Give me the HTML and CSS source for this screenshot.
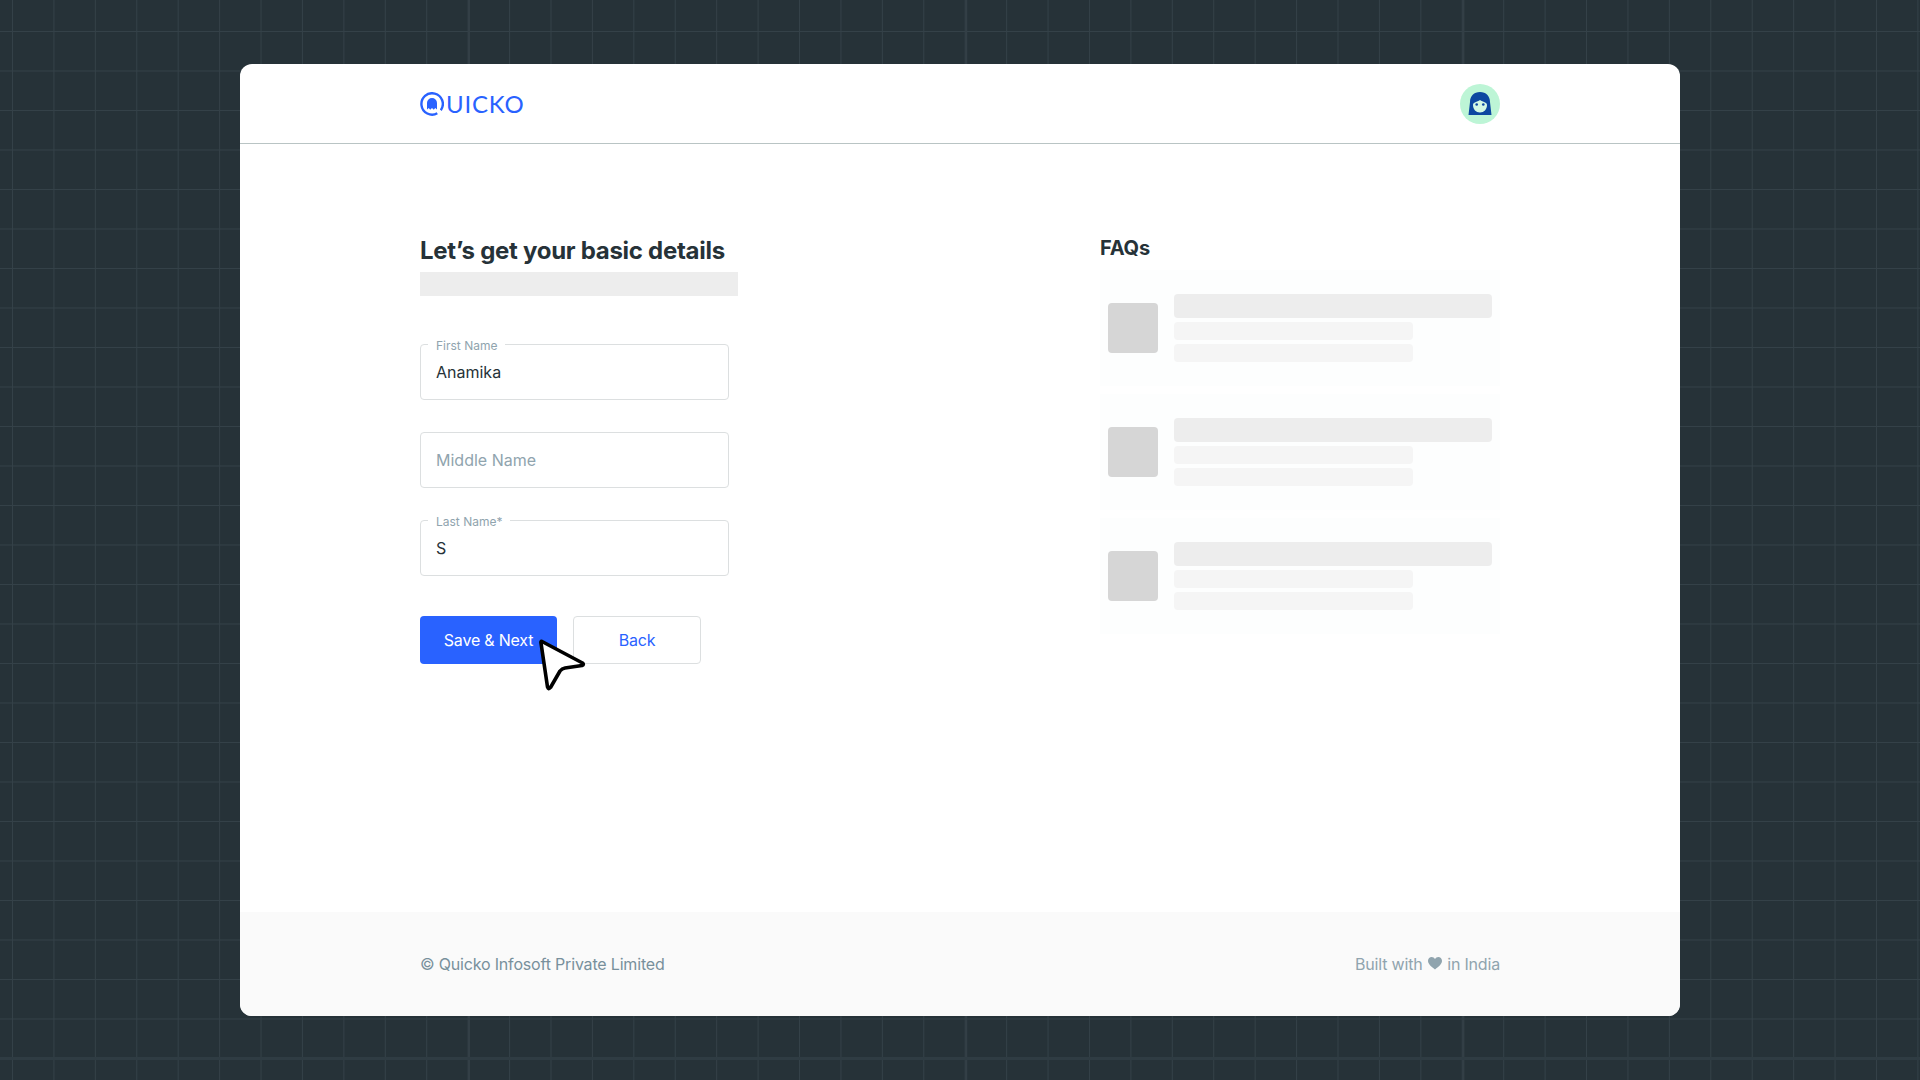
FILE: index.html
```html
<!DOCTYPE html>
<html>

<head>
    <title>Quicko</title>
    <meta charset="utf-8">
    <meta name="viewport" content="width=device-width, initial-scale=1.0">
    <link rel="stylesheet" href="styles.css">
</head>

<body>
    <div class="kort">
        <header class="top">
            <div class="logo">
                <svg class="logo-ikon" width="24" height="24" viewBox="0 0 24 24">
                    <path d="M17.300 21.300A10.700 10.700 0 1 1 20.800 18.200" fill="none" stroke="#2962ff" stroke-width="2.400"/>
                    <path d="M7 17.500V11a5 5 0 0 1 10 0v6.500l-1.800-1.500-1.400 1.700-1.800-1.700-1.800 1.700-1.400-1.700z" fill="#2962ff"/>
                </svg>
                <span class="logo-tekst">UICKO</span>
            </div>
            <div class="avatar">
                <svg width="24" height="23" viewBox="0 0 24 23">
                    <path d="M.5 23L2 10C2 4 6 0 12 0s10 4 10 10l1.500 13z" fill="#0d47a1"/>
                    <path d="M5 13c0-3 4-3 7-5 3 2 7 2 7 5 0 4.500-3 7.500-7 7.500S5 17.500 5 13z" fill="#d4f8e4"/>
                    <circle cx="8.700" cy="12.500" r="1.300" fill="#0d47a1"/>
                    <circle cx="15.300" cy="12.500" r="1.300" fill="#0d47a1"/>
                </svg>
            </div>
        </header>

        <main class="indhold">
            <section class="formular">
                <h1>Let’s get your basic details</h1>
                <div class="skelet-linje"></div>

                <div class="felter">
                    <div class="felt">
                        <span class="felt-label">First Name</span>
                        <span class="felt-vaerdi">Anamika</span>
                    </div>
                    <div class="felt">
                        <span class="felt-tom">Middle Name</span>
                    </div>
                    <div class="felt">
                        <span class="felt-label">Last Name*</span>
                        <span class="felt-vaerdi">S</span>
                    </div>
                </div>

                <div class="knapper">
                    <button class="knap-primaer">Save &amp; Next</button>
                    <button class="knap-sekundaer">Back</button>
                    <svg class="cursor" width="56" height="60" viewBox="0 0 56 60">
                        <path d="M5 3.500Q3.500 3 4 5L10.500 49Q11.500 52 13.500 49.500L23 33Q25 30.500 28 30L45 27.500Q47.500 26.500 45.500 25Z" fill="#fff" stroke="#000" stroke-width="3.600" stroke-linejoin="round"/>
                    </svg>
                </div>
            </section>

            <aside class="faq">
                <h2>FAQs</h2>
                <div class="faq-liste">
                    <article class="faq-item">
                        <div class="faq-billede"></div>
                        <div class="faq-tekst">
                            <div class="bar-stor"></div>
                            <div class="bar-lille"></div>
                            <div class="bar-lille"></div>
                        </div>
                    </article>
                    <article class="faq-item">
                        <div class="faq-billede"></div>
                        <div class="faq-tekst">
                            <div class="bar-stor"></div>
                            <div class="bar-lille"></div>
                            <div class="bar-lille"></div>
                        </div>
                    </article>
                    <article class="faq-item">
                        <div class="faq-billede"></div>
                        <div class="faq-tekst">
                            <div class="bar-stor"></div>
                            <div class="bar-lille"></div>
                            <div class="bar-lille"></div>
                        </div>
                    </article>
                </div>
            </aside>
        </main>

        <footer class="bund">
            <span class="copyright">© Quicko Infosoft Private Limited</span>
            <span class="built">Built with
                <svg class="hjerte" width="14" height="13" viewBox="0 0 14 13">
                    <path d="M7 12.500C3 9.500 0 7 0 3.800 0 1.500 1.800 0 3.700 0 5 0 6.300.7 7 2 7.700.7 9 0 10.300 0 12.200 0 14 1.500 14 3.800 14 7 11 9.500 7 12.500z" fill="#90a4ae"/>
                </svg>
                in India</span>
        </footer>
    </div>
</body></html>
```
FILE: styles.css
```css
* {
    box-sizing: border-box;
}

body {
    margin: 0;
    height: 1080px;
    overflow: hidden;
    padding-top: 64px;
    font-family: 'Inter', sans-serif;
    background-color: #263238;
    background-image:
        linear-gradient(#2f3c43, #2f3c43),
        linear-gradient(to right, #333f46 2px, transparent 2px),
        linear-gradient(to right, #344148 1px, transparent 1px),
        linear-gradient(to bottom, #344148 1px, transparent 1px);
    background-size: 100% 3px, 497.2px 100%, 41.43px 39.5px, 41.43px 39.5px;
    background-position: 0 1057px, 468px 0, 12px 31px, 12px 31px;
    background-repeat: no-repeat, repeat, repeat, repeat;
}

.kort {
    width: 1440px;
    height: 952px;
    margin: 0 auto;
    background: white;
    border-radius: 12px;
    overflow: hidden;
    display: flex;
    flex-direction: column;
}

.top {
    height: 80px;
    padding: 0 180px;
    border-bottom: 1px solid #b9c4c4;
    display: flex;
    justify-content: space-between;
    align-items: center;
}

.logo {
    display: flex;
    align-items: center;
    gap: 2px;
}

.logo-tekst {
    font-family: 'Lato', sans-serif;
    font-size: 24px;
    line-height: 24px;
    letter-spacing: 0.8px;
    color: #2962ff;
}

.avatar {
    width: 40px;
    height: 40px;
    border-radius: 50%;
    background-color: #bdf5d6;
    display: flex;
    align-items: flex-end;
    justify-content: center;
    padding-bottom: 9px;
}

.indhold {
    flex: 1;
    padding: 88px 180px 0;
    display: flex;
    justify-content: space-between;
}

.formular {
    width: 318px;
}

h1 {
    margin: 1px 0 0;
    font-size: 24px;
    line-height: 36px;
    font-weight: 700;
    letter-spacing: -0.28px;
    color: #263238;
    white-space: nowrap;
}

.skelet-linje {
    height: 24px;
    margin-top: 3px;
    background-color: #ededed;
}

.felter {
    width: 309px;
    margin-top: 48px;
    display: flex;
    flex-direction: column;
    gap: 32px;
}

.felt {
    position: relative;
    height: 56px;
    padding: 0 15px;
    border: 1px solid #dcdfe0;
    border-radius: 4px;
    display: flex;
    align-items: center;
    font-size: 16px;
}

.felt-label {
    position: absolute;
    top: -6px;
    left: 7px;
    padding: 0 8px;
    font-size: 12px;
    line-height: 14px;
    background: white;
    color: #90a4ae;
}

.felt-vaerdi {
    color: #263238;
}

.felt-tom {
    color: #90a4ae;
}

.knapper {
    position: relative;
    margin-top: 40px;
    display: flex;
    gap: 16px;
}

.knapper button {
    height: 48px;
    font-family: 'Inter', sans-serif;
    font-size: 16px;
    letter-spacing: -0.2px;
    border-radius: 4px;
}

.knap-primaer {
    width: 137px;
    border: none;
    background-color: #2962ff;
    color: white;
}

.knap-sekundaer {
    width: 128px;
    border: 1px solid #dcdfe0;
    background: white;
    color: #2962ff;
}

.cursor {
    position: absolute;
    left: 117px;
    top: 22px;
}

.faq {
    width: 400px;
}

h2 {
    margin: 2px 0 0;
    font-size: 20px;
    line-height: 28px;
    font-weight: 700;
    letter-spacing: -0.2px;
    color: #263238;
}

.faq-liste {
    margin-top: 8px;
    display: flex;
    flex-direction: column;
    gap: 8px;
}

.faq-item {
    height: 116px;
    padding: 24px 8px 0;
    background-color: #fdfefe;
    display: flex;
    gap: 16px;
}

.faq-billede {
    width: 50px;
    height: 50px;
    margin-top: 9px;
    border-radius: 4px;
    background-color: #d6d6d6;
}

.faq-tekst {
    flex: 1;
    display: flex;
    flex-direction: column;
    gap: 4px;
}

.bar-stor {
    height: 24px;
    border-radius: 4px;
    background-color: #ededed;
}

.bar-lille {
    width: 239px;
    height: 18px;
    border-radius: 4px;
    background-color: #f5f5f5;
}

.bund {
    height: 104px;
    padding: 0 180px;
    background-color: #fafafa;
    display: flex;
    justify-content: space-between;
    align-items: center;
    font-size: 16px;
    letter-spacing: -0.18px;
}

.copyright {
    color: #78909c;
}

.built {
    color: #90a4ae;
}

.hjerte {
    margin: 0 1px;
}
```
